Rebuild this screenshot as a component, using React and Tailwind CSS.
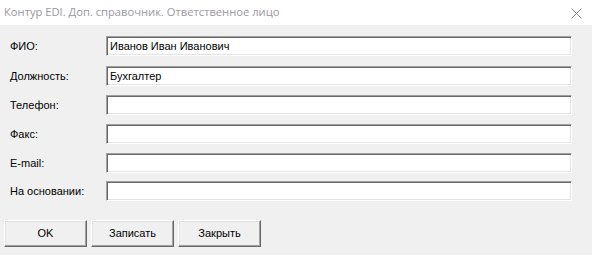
import React from 'react';

const fields = [
  { label: 'ФИО:', value: 'Иванов Иван Иванович', mt: 'mt-[11px]' },
  { label: 'Должность:', value: 'Бухгалтер', mt: 'mt-[10px]' },
  { label: 'Телефон:', value: '', mt: 'mt-[9px]' },
  { label: 'Факс:', value: '', mt: 'mt-[9px]' },
  { label: 'E-mail:', value: '', mt: 'mt-[9px]' },
  { label: 'На основании:', value: '', mt: 'mt-[8px]' },
];

const Field = ({ label, value, mt }) => (
  <div className={`flex items-center h-[20px] ${mt}`}>
    <div className="w-[96px] text-black">{label}</div>
    <div className="w-[466px] h-[20px] bg-white border border-t-[#a0a0a0] border-l-[#a0a0a0] border-b-white border-r-white shadow-[inset_1px_1px_0_#696969,inset_-1px_-1px_0_#e3e3e3] flex items-center pl-[3px] text-black">
      {value}
    </div>
  </div>
);

const Btn = ({ children }) => (
  <button className="w-[83px] h-[27px] bg-[#f0f0f0] border border-t-white border-l-white border-b-[#696969] border-r-[#696969] shadow-[inset_-1px_-1px_0_#a0a0a0,inset_1px_1px_0_#e3e3e3] text-black">
    {children}
  </button>
);

export default function App() {
  return (
    <div className="w-[592px] h-[255px] bg-[#f0f0f0] text-[11px] font-['Liberation_Sans',Arial,sans-serif] flex flex-col overflow-hidden">
      <div className="h-[25px] bg-white flex items-center justify-between pl-[4px] pr-[10px]">
        <span className="text-[#9c98a0] font-['Open_Sans',sans-serif] text-[11.2px]">
          Контур EDI. Доп. справочник. Ответственное лицо
        </span>
        <svg width="11" height="11" viewBox="0 0 11 11" className="mt-[1px]">
          <path d="M0.5 0.5 L10.5 10.5 M10.5 0.5 L0.5 10.5" stroke="#8a8a8a" strokeWidth="1" />
        </svg>
      </div>
      <div className="flex flex-col pl-[10px]">
        {fields.map((f) => (
          <Field key={f.label} {...f} />
        ))}
      </div>
      <div className="flex gap-[4px] pl-[4px] mt-[19px]">
        <Btn>OK</Btn>
        <Btn>Записать</Btn>
        <Btn>Закрыть</Btn>
      </div>
    </div>
  );
}
